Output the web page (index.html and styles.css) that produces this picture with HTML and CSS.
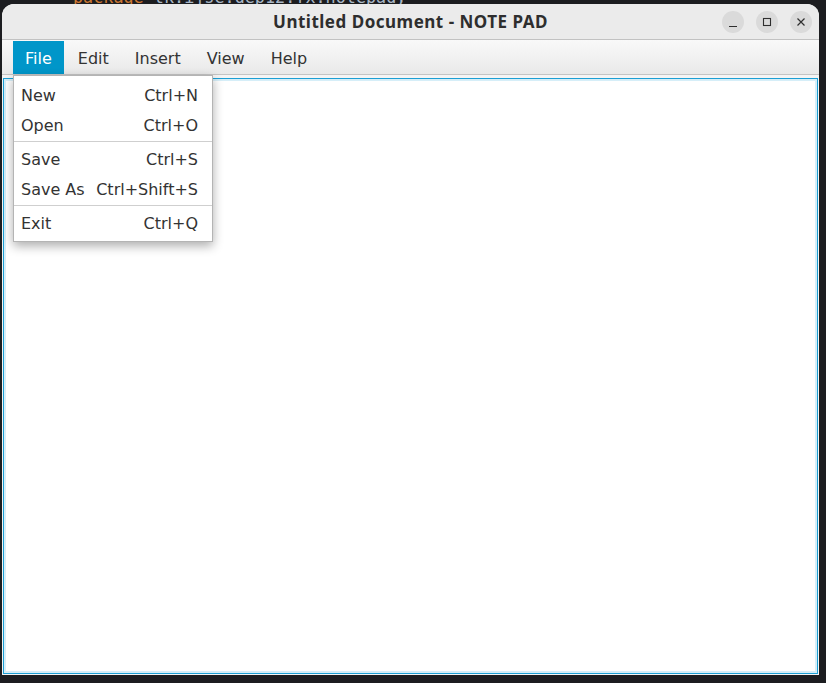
FILE: index.html
```html
<!DOCTYPE html>
<html>
<head>
<meta charset="utf-8">
<title>Untitled Document - NOTE PAD</title>
<link rel="stylesheet" href="styles.css">
</head>
<body>
<div class="desktop">
  <div class="code"><span class="kw">package</span> tk.ijse.dep12.fx.notepad;</div>
  <div class="window">
    <div class="titlebar">
      <div></div>
      <div class="title">Untitled Document - NOTE PAD</div>
      <div class="controls">
        <span class="wbtn"><svg width="22" height="22" viewBox="0 0 22 22"><path d="M7 15.5h8" stroke="#2e2e2e" stroke-width="1.2"/></svg></span>
        <span class="wbtn"><svg width="22" height="22" viewBox="0 0 22 22"><rect x="7.5" y="7.5" width="7" height="7" fill="none" stroke="#2e2e2e" stroke-width="1.1"/></svg></span>
        <span class="wbtn"><svg width="22" height="22" viewBox="0 0 22 22"><path d="M7.5 7.5l7 7M14.5 7.5l-7 7" stroke="#2e2e2e" stroke-width="1.2"/></svg></span>
      </div>
    </div>
    <div class="menubar">
      <span class="mitem active">File</span>
      <span class="mitem">Edit</span>
      <span class="mitem">Insert</span>
      <span class="mitem">View</span>
      <span class="mitem">Help</span>
    </div>
    <div class="textarea"></div>
    <div class="popup">
      <div class="pitem"><span>New</span><span>Ctrl+N</span></div>
      <div class="pitem"><span>Open</span><span>Ctrl+O</span></div>
      <div class="sep"></div>
      <div class="pitem"><span>Save</span><span>Ctrl+S</span></div>
      <div class="pitem"><span>Save As</span><span>Ctrl+Shift+S</span></div>
      <div class="sep"></div>
      <div class="pitem"><span>Exit</span><span>Ctrl+Q</span></div>
    </div>
  </div>
</div>
</body>
</html>
```
FILE: styles.css
```css
* { box-sizing: border-box; }
html, body { margin: 0; padding: 0; }
body {
  background: #1c1d20;
  width: 826px;
  height: 683px;
  overflow: hidden;
}
.desktop {
  position: relative;
  width: 826px;
  height: 683px;
  padding: 4px 7px 0 2px;
  overflow: hidden;
}
.code {
  position: absolute;
  left: 73px;
  top: -13px;
  font-family: "DejaVu Sans Mono", monospace;
  font-size: 16.8px;
  line-height: 20px;
  color: #a9b7c6;
  white-space: pre;
}
.code .kw { color: #cc7832; }
.window {
  position: relative;
  width: 817px;
  height: 671px;
  background: #f4f4f4;
  border-radius: 12px 12px 0 0;
  overflow: hidden;
  display: flex;
  flex-direction: column;
}
.titlebar {
  height: 36px;
  flex: none;
  background: #ebebeb;
  border-bottom: 1px solid #c2c2c2;
  display: grid;
  grid-template-columns: 1fr auto 1fr;
  align-items: center;
}
.title {
  font-family: "Noto Sans", sans-serif;
  font-weight: 700;
  font-size: 17px;
  letter-spacing: 0.5px;
  color: #2e2e2e;
  padding-bottom: 1px;
}
.controls {
  justify-self: end;
  display: flex;
  gap: 12px;
  padding-right: 7px;
}
.wbtn {
  width: 22px;
  height: 22px;
  border-radius: 50%;
  background: #dadada;
  display: block;
}
.wbtn svg { display: block; }
.menubar {
  height: 35px;
  flex: none;
  padding: 1px 0 0 11px;
  background: linear-gradient(#f9f9f9, #e9e9e9);
  border-bottom: 1px solid #c4c4c4;
  display: flex;
  gap: 2px;
  align-items: stretch;
  font-family: "DejaVu Sans", sans-serif;
  font-size: 16px;
  color: #333;
}
.mitem {
  display: flex;
  align-items: center;
  padding: 2px 12px 0;
}
.mitem.active {
  background: #0096c9;
  color: #fff;
}
.textarea {
  flex: 1;
  margin: 3px 1px 1px 1px;
  background: #fff;
  border: 1px solid #1c9fd4;
  box-shadow: inset 0 0 0 2px #d6eef8;
}
.popup {
  position: absolute;
  left: 11px;
  top: 71px;
  width: 200px;
  background: #fff;
  border: 1px solid #b4b4b4;
  padding: 4px 0 3px;
  box-shadow: 0 4px 10px rgba(0, 0, 0, 0.32);
  font-family: "DejaVu Sans", sans-serif;
  font-size: 16px;
  color: #333;
}
.pitem {
  height: 30px;
  padding: 1px 14px 0 7px;
  display: flex;
  align-items: center;
  justify-content: space-between;
  gap: 8px;
  white-space: nowrap;
}
.sep {
  height: 3px;
  margin-top: 1px;
  border-top: 1px solid #cfcfcf;
}
```
